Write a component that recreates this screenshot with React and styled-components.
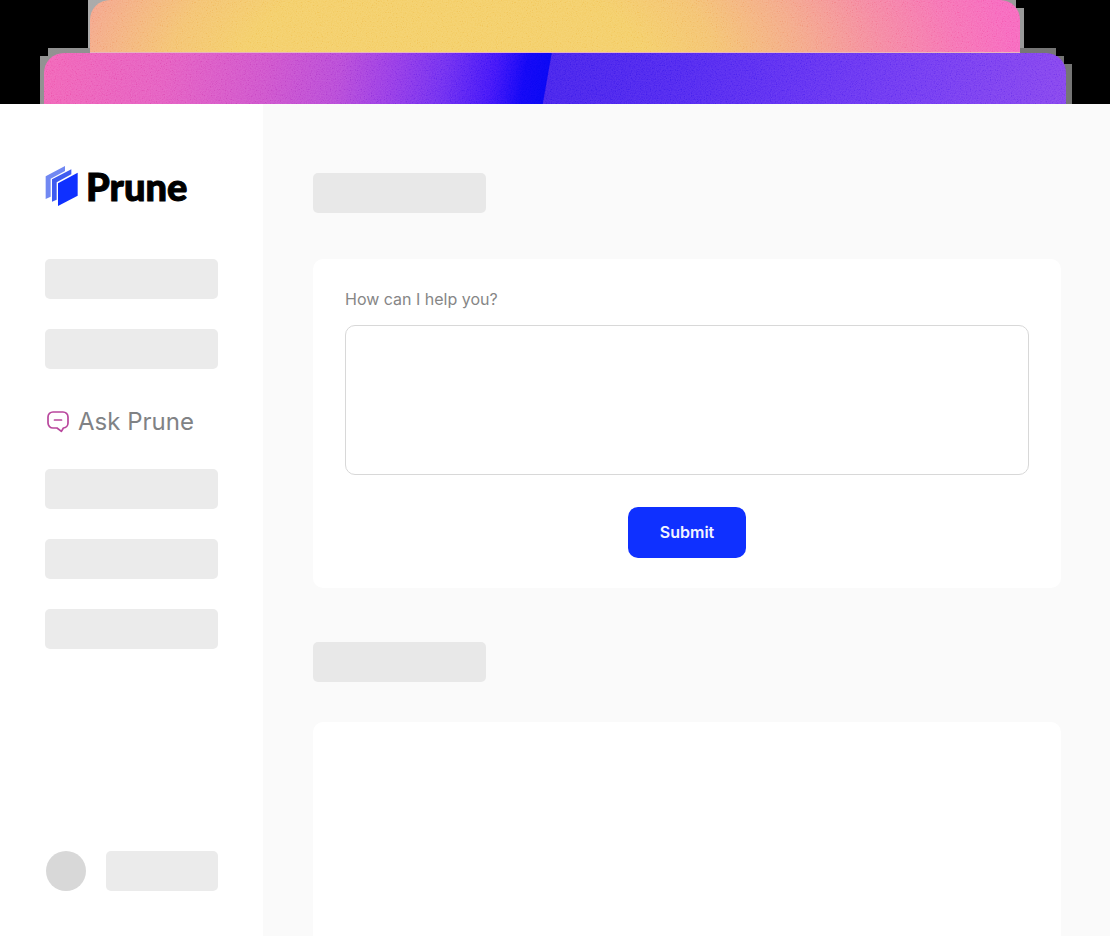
import React from "react";
import styled, { createGlobalStyle } from "styled-components";

const GlobalStyle = createGlobalStyle`
  *, *::before, *::after { box-sizing: border-box; }
  body {
    margin: 0;
    background: #fff;
    font-family: Inter, "Liberation Sans", sans-serif;
  }
`;

const Page = styled.div`
  display: flex;
  flex-direction: column;
  min-height: 100vh;
`;

const Banner = styled.header`
  background: #000;
  overflow: hidden;
`;

const BackHalo = styled.div`
  position: relative;
  z-index: 1;
  margin: 0 86px 0 88px;
  padding: 0 4px 0 2px;
  background: linear-gradient(90deg, #ababab, #999);
  clip-path: polygon(0 0, calc(100% - 8px) 0, calc(100% - 8px) 8px, 100% 8px, 100% 48px, calc(100% - 4px) 48px, calc(100% - 4px) 100%, 2px 100%, 2px 48px, 0 48px);
`;

const FrontHalo = styled.div`
  margin: -5px 38px 0 40px;
  padding: 5px 6px 0 4px;
  background: linear-gradient(90deg, #929292, #757575);
  clip-path: polygon(8px 0, calc(100% - 16px) 0, calc(100% - 16px) 8px, calc(100% - 8px) 8px, calc(100% - 8px) 16px, 100% 16px, 100% 100%, 0 100%, 0 8px, 8px 8px);
`;

const Strip = styled.div`
  position: relative;
  overflow: hidden;
  border-radius: 20px 20px 0 0;
`;

const WarmStrip = styled(Strip)`
  height: 53px;
  border-bottom: 1px solid #e9b4bd;
  background: radial-gradient(ellipse 62% 800% at 38% 220%, #f4d06a 0%, #f4cf6b 38%, #f4c474 50%, #f4ab8b 64%, #f58ba3 78%, #f676b5 90%, #f76bbf 100%);
`;

const CoolStrip = styled(Strip)`
  height: 51px;
  background: linear-gradient(100deg, #f266b8 0%, #e560c2 12%, #cf55cd 22%, #b94cd8 29%, #9a3de6 34%, #7430f0 39%, #4316f8 44%, #1207f6 47%, #0a07f4 49.2%, #4824ec 49.3%, #5229f0 62%, #6030f2 72%, #753cf2 86%, #8846ee 100%);
`;

const GrainLayer = styled.svg`
  position: absolute;
  inset: 0;
  width: 100%;
  height: 100%;
  opacity: 0.2;
  mix-blend-mode: soft-light;
`;

const Body = styled.div`
  display: flex;
  flex: 1;
`;

const Sidebar = styled.aside`
  display: flex;
  flex-direction: column;
  flex: 0 0 263px;
  padding: 62px 45px 45px;
  background: #fff;
`;

const Brand = styled.a`
  display: flex;
  align-items: center;
  gap: 8px;
  height: 40px;
  margin-bottom: 53px;
  color: #000;
  text-decoration: none;
  font: 900 38px/40px Lato, "Liberation Sans", sans-serif;
  -webkit-text-stroke: 1px #000;
`;

const Nav = styled.nav`
  display: flex;
  flex-direction: column;
  gap: 30px;
`;

const NavLink = styled.a`
  display: flex;
  align-items: center;
  gap: 8px;
  height: 40px;
  padding: 6px 0 0 1px;
  color: #808285;
  font-size: 24px;
  line-height: 34px;
  white-space: nowrap;
  text-decoration: none;
`;

const Placeholder = styled.div`
  width: ${({ $width }) => $width || 173}px;
  height: 40px;
  border-radius: 5px;
  background: ${({ $tone }) => $tone || "#ebebeb"};
`;

const Account = styled.div`
  display: flex;
  gap: 20px;
  margin-top: auto;
  padding-left: 1px;
`;

const Avatar = styled.div`
  width: 40px;
  height: 40px;
  border-radius: 50%;
  background: #d8d8d8;
`;

const Main = styled.main`
  display: flex;
  flex: 1;
  flex-direction: column;
  min-width: 0;
  padding: 69px 49px 0 50px;
  background: #fafafa;
`;

const Card = styled.form`
  display: flex;
  flex-direction: column;
  margin: 46px 0 54px;
  padding: 30px 32px;
  border-radius: 10px;
  background: #fff;
`;

const EmptyCard = styled.section`
  flex: 1;
  margin-top: 40px;
  border-radius: 10px 10px 0 0;
  background: #fff;
`;

const Label = styled.label`
  margin-bottom: 16px;
  color: #868686;
  font-size: 16px;
  line-height: 20px;
`;

const Question = styled.textarea`
  display: block;
  width: 100%;
  height: 150px;
  padding: 16px;
  border: 1px solid #d8d8d8;
  border-radius: 10px;
  background: #fff;
  font: inherit;
  resize: none;
`;

const SubmitButton = styled.button`
  align-self: center;
  height: 51px;
  margin-top: 32px;
  padding: 0 32px 2px;
  border: 0;
  border-radius: 10px;
  background: #0f30ff;
  color: #f2f4ff;
  font: 600 16px/20px Inter, "Liberation Sans", sans-serif;
`;

function Grain({ id }) {
  return (
    <GrainLayer aria-hidden="true">
      <filter id={id} x="0" y="0" width="100%" height="100%">
        <feTurbulence type="fractalNoise" baseFrequency="0.8" numOctaves="2" />
        <feColorMatrix type="matrix" values="2 0 0 0 -0.5  2 0 0 0 -0.5  2 0 0 0 -0.5  0 0 0 0 1" />
      </filter>
      <rect width="100%" height="100%" filter={`url(#${id})`} />
    </GrainLayer>
  );
}

function BrandMark() {
  return (
    <svg width="33" height="40" viewBox="0 0 99 120" aria-hidden="true">
      <path fill="#7188f2" d="M2 31 L60 0 V15 L17 38 V92 L2 99Z" />
      <path fill="#3f5cf0" d="M21 40 L79 10 V25 L35 49 V101 L21 107Z" />
      <path fill="#0f30ff" d="M39 52 L98 20 V89 L39 120Z" />
    </svg>
  );
}

function ChatIcon() {
  return (
    <svg width="24" height="24" viewBox="0 0 24 24" fill="none" stroke="#b9479d" strokeWidth="1.7" strokeLinecap="round" strokeLinejoin="round" aria-hidden="true">
      <path d="M7 2h10a5 5 0 0 1 5 5v6a5 5 0 0 1-4.6 5l-2 3.4-4.4-3.4H7a5 5 0 0 1-5-5V7a5 5 0 0 1 5-5Z" />
      <path d="M8.5 10h7" />
    </svg>
  );
}

export default function App() {
  return (
    <Page>
      <GlobalStyle />
      <Banner>
        <BackHalo>
          <WarmStrip><Grain id="grain-warm" /></WarmStrip>
        </BackHalo>
        <FrontHalo>
          <CoolStrip><Grain id="grain-cool" /></CoolStrip>
        </FrontHalo>
      </Banner>
      <Body>
        <Sidebar>
          <Brand href="#">
            <BrandMark />
            Prune
          </Brand>
          <Nav>
            <Placeholder />
            <Placeholder />
            <NavLink href="#ask">
              <ChatIcon />
              Ask Prune
            </NavLink>
            <Placeholder />
            <Placeholder />
            <Placeholder />
          </Nav>
          <Account>
            <Avatar />
            <Placeholder $width={112} />
          </Account>
        </Sidebar>
        <Main>
          <Placeholder $tone="#e8e8e8" />
          <Card onSubmit={(event) => event.preventDefault()}>
            <Label htmlFor="question">How can I help you?</Label>
            <Question id="question" />
            <SubmitButton type="submit">Submit</SubmitButton>
          </Card>
          <Placeholder $tone="#e8e8e8" />
          <EmptyCard />
        </Main>
      </Body>
    </Page>
  );
}
